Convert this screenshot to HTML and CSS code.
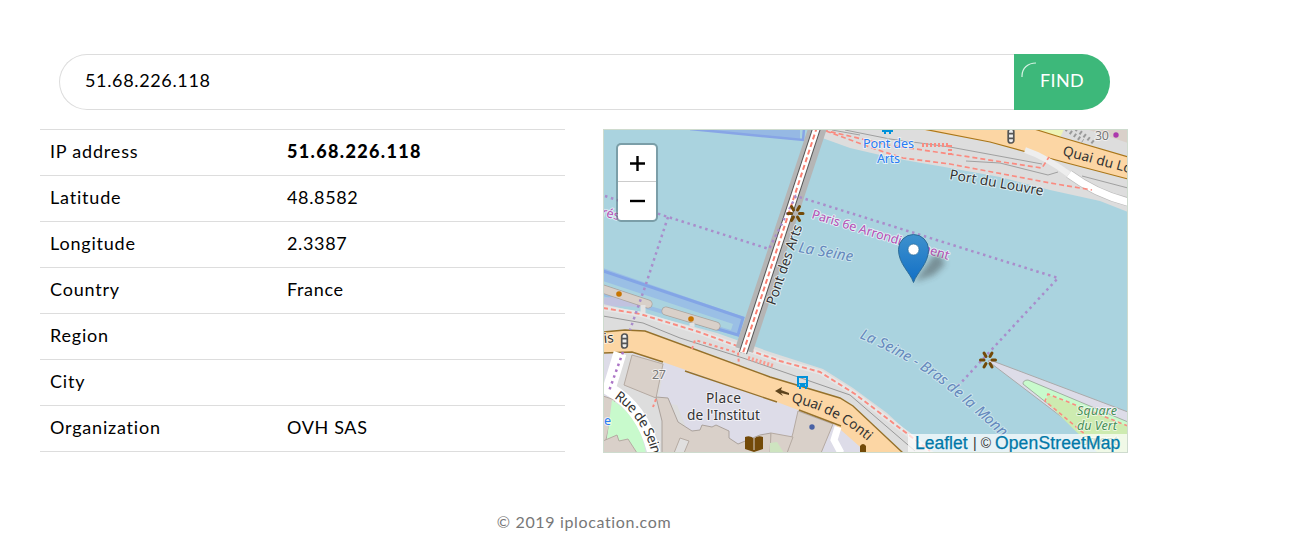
FILE: index.html
```html
<!DOCTYPE html>
<html lang="en">
<head>
<meta charset="utf-8">
<title>IP location</title>
<link rel="stylesheet" href="styles.css">
</head>
<body>
<main class="page">
  <form class="search">
    <input class="search-input" type="text" value="51.68.226.118" aria-label="IP address">
    <button class="search-button" type="button"><svg class="spinner" width="16" height="16" viewBox="0 0 16 16"><path d="M1 15V14C1 6 7 1 15 1"/></svg>FIND</button>
  </form>
  <div class="content">
    <dl class="details">
      <div class="row"><dt>IP address</dt><dd class="strong">51.68.226.118</dd></div>
      <div class="row"><dt>Latitude</dt><dd>48.8582</dd></div>
      <div class="row"><dt>Longitude</dt><dd>2.3387</dd></div>
      <div class="row"><dt>Country</dt><dd>France</dd></div>
      <div class="row"><dt>Region</dt><dd></dd></div>
      <div class="row"><dt>City</dt><dd></dd></div>
      <div class="row"><dt>Organization</dt><dd>OVH SAS</dd></div>
    </dl>
    <section class="map">
      <svg class="map-canvas" width="525" height="324" viewBox="603 129 525 324">
        <defs>
          <linearGradient id="pin" x1="0" y1="0" x2="0" y2="1"><stop offset="0" stop-color="#3e91cd"/><stop offset="1" stop-color="#126fc6"/></linearGradient>
          <filter id="soft" x="-40%" y="-40%" width="180%" height="180%"><feGaussianBlur stdDeviation="3"/></filter>
          <g id="star" stroke="#734a08" stroke-width="3" stroke-linecap="round"><path d="M-7.5 0H-4M4 0H7.5M-4-7-2-3.5M4-7 2-3.5M-4 7-2 3.5M4 7 2 3.5"/></g>
          <g id="signal" fill="#eee" stroke="#555" stroke-width="1.7"><rect x="-2.8" y="-7" width="5.6" height="14" rx="2.5"/><path d="M-2.5-2.3h5M-2.5 2.3h5"/></g>
          <path id="seine" d="M859 338Q911 360 941 384T1030 463"/>
          <path id="rue" d="M614 398Q643 417 653 458"/>
          <path id="conti" d="M791 402Q838 412 874 447"/>
        </defs>
        <rect x="603" y="129" width="525" height="324" fill="#aad3df"/>

        <!-- basins and moorings on the left bank -->
        <path d="M690 129 800 140V129" fill="#96b9e4"/>
        <path d="M690 129 803 140 804 129" fill="none" stroke="#87a5e6" stroke-width="2.5"/>
        <path d="M603 268 744 317 739 337 603 296Z" fill="#9abfe5"/>
        <path d="M603 271 743 318 738 335 690 321" fill="none" stroke="#83a5e6" stroke-width="3"/>
        <path d="M603 281 733 324 731 330 603 292Z" fill="#aad3df"/>
        <path d="M603 298 622 296 650 307 603 306Z" fill="#c1c2df"/>
        <g stroke="#aaa49f" stroke-width="9" stroke-linecap="round"><path d="M603 289 648 304M666 311 716 326"/></g>
        <g stroke="#d9d0c9" stroke-width="7.5" stroke-linecap="round"><path d="M603 289 648 304M666 311 716 326"/></g>
        <g fill="#c77400"><circle cx="619" cy="294" r="2.8"/><circle cx="691" cy="319" r="2.8"/></g>
        <path d="M643 305v8M692 323v7" stroke="#e3e3e3" stroke-width="5"/>

        <!-- right bank -->
        <path d="M816 129 814 135 850 148 893 158 950 168 1000 177 1050 190 1100 201 1128 212V129Z" fill="#dddddd"/>
        <path d="M1035 129 1060 138 1064 129Z" fill="#eef4b5"/>
        <path d="M1086 129 1128 143V129Z" fill="#d9d0c9"/>
        <path d="M1076 129 1094 143M1066 129 1083 141" stroke="#999" stroke-width="4" stroke-dasharray="2 3"/>
        <path d="M918 129 990 142 1067 163 1128 179V157L1060 137 1034 129Z" fill="#fcd6a4"/>
        <path d="M918 128 990 142 1067 163 1128 179M1034 129 1060 137 1128 157" fill="none" stroke="#a97619" stroke-width="1.2"/>
        <g fill="none" stroke="#999" stroke-width=".9"><path d="M845 130 890 139 950 147 1042 164M832 130 860 135M966 161 1000 163 1048 175 1058 172M1082 176 1128 188"/></g>
        <path d="M1025 150Q1046 157 1070 175" fill="none" stroke="#eee" stroke-width="6"/>
        <path d="M1069 174Q1096 194 1128 202" fill="none" stroke="#bbb" stroke-width="9"/>
        <path d="M1069 174Q1096 194 1128 202" fill="none" stroke="#fff" stroke-width="7.5"/>
        <g fill="none" stroke="#fa8b80" stroke-width="1.7" stroke-dasharray="5 3"><path d="M823 130 888 145 950 154 1042 168 1049 157M826 131 875 149 903 158 950 164 1050 183 1092 190"/><path d="M922 145H950V155" stroke-width="4" stroke-dasharray="2 2"/></g>

        <!-- left bank -->
        <path d="M603 304 650 315 717 333 770 352 823 369 853 388 887 413 913 437 935 453H603Z" fill="#dddddd"/>
        <path d="M603 350 635 352 777 402 833 423 870 453H603Z" fill="#dddce8"/>
        <path d="M625 352 664 363 658 402 677 405 685 425V453H650L642 420 612 397Z" fill="#dddddd"/>
        <path d="M632 355 663 364 656 398 624 385Z" fill="#d9d0c9" stroke="#b5aaa2"/>
        <path d="M603 396 615 400 603 453Z" fill="#d9d0c9" stroke="#b5aaa2"/>
        <path d="M612 400Q640 417 646 453H630L607 439Z" fill="#c8facc"/>
        <path d="M603 441 617 435 619 441 628 439 637 453H603Z" fill="#d9d0c9" stroke="#b5aaa2"/>
        <path d="M656 397 668 398 678 422 692 431 700 430 702 425 712 427 716 425 729 431V438L738 444 760 435 771 433V453H662V421Z" fill="#d9d0c9" stroke="#aba29c"/>
        <path d="M674 453 680 438 689 441 684 453" fill="#e0dfdf" stroke="#b5aaa2"/>
        <path d="M798 411 833 424 821 453H787L793 433Z" fill="#d9d0c9" stroke="#b5aaa2"/>
        <path d="M771 433 793 437 787 453H770Z" fill="#d9d0c9" stroke="#b5aaa2"/>
        <path d="M770 443 777 442 784 453H770Z" fill="#cee4c0"/>
        <path d="M603 332 625 330 645 331 770 377 840 398 853 406 903 453H867L833 423 777 402 663 362 632 352 603 353Z" fill="#fcd6a4"/>
        <path d="M603 332 625 330 645 331 770 377 840 398 853 406 903 453M603 353 632 352 663 362M685 371 777 402M799 410 841 426" fill="none" stroke="#95712b" stroke-width="1.4"/>
        <path d="M620 353 609 389Q643 408 654 453" fill="none" stroke="#fff" stroke-width="13"/>
        <path d="M838 427 834 440 841 453" fill="none" stroke="#fff" stroke-width="7"/>
        <path d="M603 316 643 323 680 338 743 358 775 369 850 395 915 451" fill="none" stroke="#999"/>
        <path d="M603 308 640 314 696 331 743 348 780 361 820 372 855 394 930 451" fill="none" stroke="#e6e6e6" stroke-width="5"/>
        <path d="M603 308 640 314 696 331 743 348 780 361 820 372 855 394 930 451" fill="none" stroke="#fa8b80" stroke-width="1.9" stroke-dasharray="5 3"/>
        <path d="M692 349 695 340 738 353 739 365M656 399 653 407" fill="none" stroke="#fa8b80" stroke-width="2" stroke-dasharray="3 3"/>
        <path d="M748 358 774 366" stroke="#fa9b90" stroke-width="4" stroke-dasharray="2 2"/>

        <!-- footbridge -->
        <path d="M818 127 744 350" stroke="#b5b5b5" stroke-width="18"/>
        <path d="M817 127 743 353" stroke="#555" stroke-width="8.5"/>
        <path d="M817 127 743 353" stroke="#fff" stroke-width="6.5"/>
        <path d="M817 127 743 353" stroke="#fa8072" stroke-width="2" stroke-dasharray="5 3"/>

        <!-- tip of the island -->
        <path d="M990 360 1128 412V453H1109L988 361Z" fill="#dddce8" stroke="#aaa"/>
        <path d="M1023 384Q1023 380 1028 380L1128 422V453H1110Z" fill="#c8facc" stroke="#a1afa2"/>
        <path d="M1048 395 1128 426V453H1098L1046 402Z" fill="#cdebb0"/>
        <path d="M1128 426 1048 394 1045 401 1092 440" fill="none" stroke="#fa8b80" stroke-width="1.6" stroke-dasharray="4 3"/>

        <g fill="none" stroke="#a98dcb" stroke-width="2.5" stroke-dasharray="2.5 3.7"><path d="M605 196 668 217 769 249 796 196 1058 278 957 387M668 217 645 287 630 330"/></g>
        <path d="M623 352 609 391" stroke="#ac75c6" stroke-width="2.5" stroke-dasharray="2.5 3.7"/>
        <use href="#star" x="795.5" y="213.5"/><use href="#star" x="988" y="360"/>
        <use href="#signal" x="1011" y="136"/><use href="#signal" x="624.5" y="341"/>
        <circle cx="1116" cy="135" r="2.7" fill="#ac39ac"/><circle cx="812" cy="427" r="2.7" fill="#4961a5"/>
        <path d="M882 129h11v3h-2v2h-2v-2h-3v2h-2v-2h-2Z" fill="#0092da"/>
        <g fill="#0092da"><path fill-rule="evenodd" d="M797 376h11v11h-1v2h-2v-2h-4v2h-2v-2h-2ZM799 378v5h7v-5Z"/></g><path d="M799 385h1M805 385h1" stroke="#fff"/>
        <path d="M745 437Q751 435 754 439 757 435 763 437V449L754 452 745 449Z" fill="#734a08"/><path d="M754 439v11" stroke="#d9d0c9"/>
        <path d="M860 453V446q3-4 6 0v7Z" fill="#734a08"/>
        <path d="M775 391 782 387 781 390 789 393V395L781 393 783 396Z" fill="#5d431c"/>

        <g class="label">
          <text x="863" y="148" textLength="51" class="blue">Pont des</text><text x="877" y="163" textLength="23" class="blue">Arts</text>
          <text x="949" y="179" textLength="95" transform="rotate(10 949 179)">Port du Louvre</text>
          <text x="1062" y="155" textLength="71" transform="rotate(15 1062 155)" class="road">Quai du Lo</text>
          <text x="1095" y="140" textLength="14" class="number">30</text>
          <text x="652" y="379" textLength="14" class="number">27</text>
          <text x="775" y="306" textLength="84" transform="rotate(-71 775 306)">Pont des Arts</text>
          <text x="811" y="218" textLength="143" transform="rotate(17 811 218)" class="purple">Paris 6e Arrondissement</text>
          <text x="601" y="216" transform="rotate(13 601 216)" class="purple">rés</text>
          <text x="798" y="252" textLength="55" transform="rotate(10 798 252)" class="water">La Seine</text>
          <text class="water"><textPath href="#seine" textLength="176">La Seine - Bras de la Monn</textPath></text>
          <text class="road"><textPath href="#conti" textLength="87">Quai de Conti</textPath></text>
          <text class="street"><textPath href="#rue" textLength="70">Rue de Sein</textPath></text>
          <text x="604" y="343" transform="rotate(-5 604 343)">is</text>
          <text x="604" y="425" class="blue">e</text>
          <text x="706" y="403" textLength="35">Place</text><text x="687" y="420" textLength="73">de l'Institut</text>
          <text x="1077" y="415" textLength="40" class="green">Square</text><text x="1077" y="430" textLength="40" class="green">du Vert</text><text x="1080" y="445" class="green">Galant</text>
        </g>

        <path d="M914 282 929 262Q938 246 945 264L934 275Z" fill="#333" opacity=".42" filter="url(#soft)"/>
        <path d="M913.5 282.5C910 272 898.5 264 898.5 249.5a15 15 0 0 1 30 0C928.5 264 917 272 913.5 282.5Z" fill="url(#pin)" stroke="#2e6c97"/>
        <circle cx="913.5" cy="249.5" r="5.5" fill="#fff" stroke="#2e6c97" stroke-width=".7"/>
      </svg>
      <div class="zoom-control">
        <button class="zoom-button" type="button" aria-label="Zoom in"><svg width="16" height="16"><path d="M1 8.5h15M8.5 1v15"/></svg></button>
        <button class="zoom-button" type="button" aria-label="Zoom out"><svg width="16" height="16"><path d="M1 8h15"/></svg></button>
      </div>
      <div class="attribution"><a>Leaflet</a><span>|</span><span>©</span><a class="osm">OpenStreetMap</a></div>
    </section>
  </div>
  <footer class="footer">© 2019 iplocation.com</footer>
</main>
</body>
</html>
```
FILE: styles.css
```css
* { box-sizing: border-box; }
body { margin: 0; background: #fff; color: #000; font: 18px/27px Lato, "Open Sans", sans-serif; }
button, input { font: inherit; color: inherit; }
.page { height: 541px; overflow: hidden; padding: 54px 185px 0 40px; }
.search { display: flex; width: 1051px; height: 56px; margin: 0 0 19px 19px; }
.search-input { flex: 1; min-width: 0; border: 1px solid #ddd; border-right: 0; border-radius: 28px 0 0 28px; padding: 0 25px 3px; letter-spacing: .65px; outline: 0; }
.search-button { position: relative; width: 96px; border: 0; border-radius: 0 28px 28px 0; background: #3db87a; color: #fff; padding: 0 0 3px; letter-spacing: .35px; }
.spinner { position: absolute; left: 7px; top: 8px; fill: none; stroke: #d7f3e4; stroke-width: 1.2; }
.content { display: flex; gap: 38px; }
.details { width: 525px; height: 323px; margin: 0; border-bottom: 1px solid #ddd; letter-spacing: .65px; }
.row { display: flex; height: 46px; padding: 8px 10px; border-top: 1px solid #ddd; }
.row dt { width: 237px; letter-spacing: .8px; }
.row dd { margin: 0; }
.row .strong { font-weight: 900; letter-spacing: 1.35px; }
.map { position: relative; width: 525px; height: 324px; overflow: hidden; }
.map::after { content: ""; position: absolute; inset: 0; border: 1px solid #cedbce; pointer-events: none; }
.map-canvas { display: block; }
.label { font: 13.7px "Noto Sans", sans-serif; fill: #333; paint-order: stroke; stroke: rgba(255, 255, 255, .6); stroke-width: 2px; stroke-linejoin: round; }
.label .road { stroke: none; }
.label .street { stroke: #fff; }
.label .blue { fill: #277cf4; font-size: 12.6px; }
.label .number { fill: #777; font-size: 12.5px; }
.label .purple { fill: #b54fb5; font-size: 12.6px; }
.label .water { fill: #6488bd; font-style: italic; font-size: 14.7px; stroke: rgba(255, 255, 255, .4); }
.label .green { fill: #468f57; font-style: italic; font-size: 12.6px; }
.zoom-control { position: absolute; left: 13px; top: 14px; width: 42px; height: 79px; border: 2px solid rgba(83, 115, 122, .55); border-radius: 5px; background: #fff; background-clip: padding-box; }
.zoom-button { display: flex; width: 38px; height: 38px; align-items: center; justify-content: center; padding: 0; border: 0; background: none; }
.zoom-button:first-child { height: 37px; border-bottom: 1px solid #ccc; }
.zoom-button path { stroke: #000; stroke-width: 2.4; fill: none; }
.attribution { position: absolute; right: 1px; bottom: 1px; display: flex; align-items: center; gap: 4px; width: 219px; height: 18px; padding-left: 7px; background: rgba(255, 255, 255, .7); color: #333; font: 14px/18px "Liberation Sans", sans-serif; }
.attribution a { color: #0078a8; font-size: 17.5px; width: 54px; letter-spacing: 0; -webkit-text-stroke: .25px #0078a8; }
.attribution .osm { width: 128px; letter-spacing: .15px; }
.footer { width: 1088px; margin-top: 55px; text-align: center; color: #777; font-size: 16px; letter-spacing: .65px; }
```
